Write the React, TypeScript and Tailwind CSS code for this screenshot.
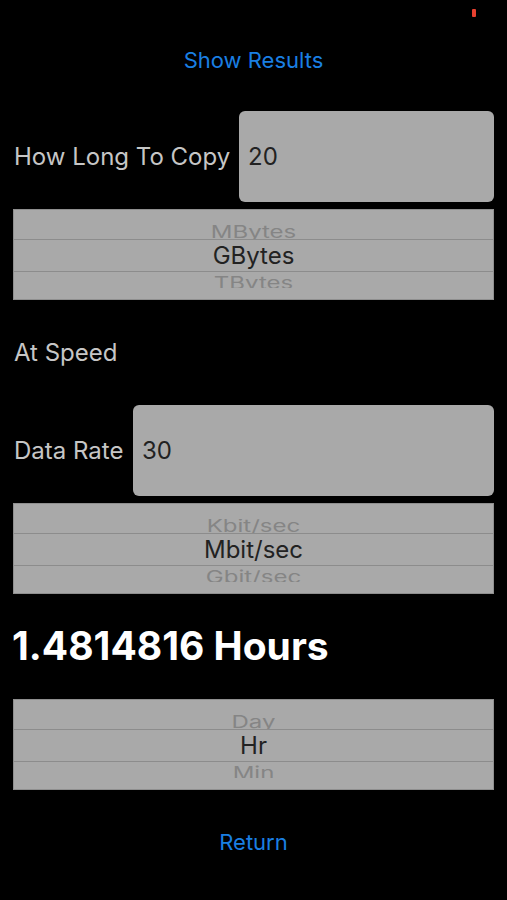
import React from 'react';

const font = { fontFamily: 'Inter, "Liberation Sans", sans-serif' };

function Picker({ above, current, below }: { above: string; current: string; below: string }) {
  return (
    <div className="w-[481px] h-[91px] bg-[#a9a9a9] border border-[#8f8f8f] flex flex-col overflow-hidden">
      <div className="h-[29px] flex flex-col justify-end items-center">
        <div className="h-[14px] flex items-end justify-center overflow-hidden">
          <span className="text-[24px] leading-none text-[#858585] scale-y-[0.7] origin-bottom translate-y-[2px] whitespace-nowrap">{above}</span>
        </div>
      </div>
      <div className="h-[33px] border-y border-[#8c8c8c] flex items-center justify-center">
        <span className="text-[24px] leading-none text-[#222]">{current}</span>
      </div>
      <div className="flex-1 flex flex-col items-center">
        <div className="h-[13px] mt-[3px] flex items-start justify-center overflow-hidden">
          <span className="text-[24px] leading-none text-[#858585] scale-y-[0.7] origin-top whitespace-nowrap">{below}</span>
        </div>
      </div>
    </div>
  );
}

export default function App() {
  return (
    <div className="relative w-[507px] h-[900px] bg-black overflow-hidden" style={font}>
      {/* status indicator */}
      <div className="absolute left-[472px] top-[9px] w-[4px] h-[8px] rounded-[1px] bg-[#e8402f]" />

      <div className="flex flex-col">
        <div className="h-[40px]" />
        <div className="h-[40px] flex items-center justify-center">
          <span className="text-[22px] text-[#1a7fe3]">Show Results</span>
        </div>

        <div className="h-[31px]" />
        <div className="h-[91px] flex items-center pl-[14px] pr-[13px]">
          <span className="flex-1 text-[24px] text-[#c6c6c6]">How Long To Copy</span>
          <div className="w-[255px] h-full rounded-[6px] bg-[#a9a9a9] flex items-center px-[9px]">
            <span className="text-[24px] text-[#222]">20</span>
          </div>
        </div>

        <div className="pl-[13px] mt-[7px]">
          <Picker above="MBytes" current="GBytes" below="TBytes" />
        </div>

        <div className="h-[105px] flex items-center pl-[14px]">
          <span className="text-[24px] text-[#c6c6c6]">At Speed</span>
        </div>

        <div className="h-[91px] flex items-center pl-[14px] pr-[13px]">
          <span className="flex-1 text-[24px] text-[#c6c6c6]">Data Rate</span>
          <div className="w-[361px] h-full rounded-[6px] bg-[#a9a9a9] flex items-center px-[9px]">
            <span className="text-[24px] text-[#222]">30</span>
          </div>
        </div>

        <div className="pl-[13px] mt-[7px]">
          <Picker above="Kbit/sec" current="Mbit/sec" below="Gbit/sec" />
        </div>

        <div className="h-[105px] flex items-center pl-[12px]">
          <span className="text-[39px] font-bold text-white">1.4814816 Hours</span>
        </div>

        <div className="pl-[13px]">
          <Picker above="Day" current="Hr" below="Min" />
        </div>

        <div className="h-[104px] flex items-center justify-center">
          <span className="text-[22px] text-[#1a7fe3]">Return</span>
        </div>
      </div>
    </div>
  );
}
